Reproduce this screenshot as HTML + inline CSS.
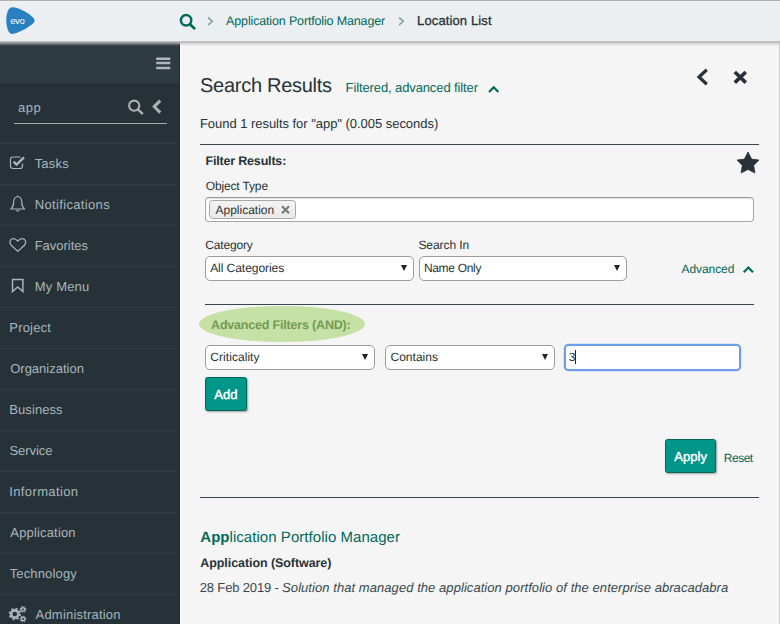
<!DOCTYPE html>
<html><head><meta charset="utf-8"><title>Search Results</title>
<style>
*{box-sizing:border-box;margin:0;padding:0}
html,body{width:780px;height:624px;overflow:hidden;background:#f5f5f5;font-family:"Liberation Sans",sans-serif;color:#263238;font-size:13px}
.a,.t{position:absolute;white-space:nowrap}
.t{line-height:20px;text-rendering:geometricPrecision}
#top{position:absolute;left:0;top:0;width:780px;height:41px;background:#eceff1;border-top:1px solid #b0aeae;box-shadow:inset 0 1px 0 #f0f3f5,inset 0 -1px 0 #eff2f4}
#shadow{position:absolute;left:0;top:41px;width:780px;height:5px;z-index:9;background:linear-gradient(rgba(188,188,188,.98) 0 1px,rgba(188,188,188,.81) 1px 2px,rgba(188,188,188,.57) 2px 3px,rgba(188,188,188,.31) 3px 4px,rgba(188,188,188,.1) 4px 5px)}
#side{position:absolute;left:0;top:41px;width:180px;height:583px;background:#263238}
#side .burger{position:absolute;left:0;top:0;width:180px;height:42px;background:#2e3b42}
#side .sh{position:absolute;left:0;top:0;width:180px;height:6px;background:linear-gradient(rgba(190,190,190,.85),rgba(160,165,168,.55) 30%,rgba(120,128,132,.25) 60%,rgba(45,58,66,0))}
.ln{position:absolute;left:0;width:180px;height:1px;background:#2e3d45}
.sel{position:absolute;height:25px;background:#fff;border:1px solid #9c9c9c;border-radius:5px}
.sel:after{content:"";position:absolute;right:6px;top:8px;border-left:3.5px solid transparent;border-right:3.5px solid transparent;border-top:6px solid #222}
.btn{position:absolute;background:#009688;border-radius:2.5px;border:1px solid #00695c;box-shadow:1px 1px 2px rgba(0,0,0,.35)}
.hr{position:absolute;height:1px;background:#37474f}
</style></head><body>
<div id="top"></div>
<div id="shadow"></div>
<div class="a" style="left:779px;top:41px;width:1px;height:583px;background:#cdcdcd"></div>
<svg class="a" style="left:6px;top:7px" width="30" height="28" viewBox="0 0 30 28"><path d="M5.2 0.4 C10 -1 24 6.5 27.5 11 C29 13 29 14.6 27.3 16.2 C22.5 20.8 10 27.3 5.5 27 C2.5 26.5 0.3 20 0.3 13.5 C0.3 7 2 1.3 5.2 0.4Z" fill="#2980c0"/><text x="4.2" y="16.9" font-family="Liberation Sans, sans-serif" font-size="9.5" fill="#fff" letter-spacing="-0.4">evo</text></svg>
<svg class="a" style="left:179px;top:13px" width="17" height="17" viewBox="0 0 17 17"><circle cx="7.1" cy="7.3" r="5.2" fill="none" stroke="#00695c" stroke-width="2.5"/><path d="M11.2 11.4 L15.2 15.2" stroke="#00695c" stroke-width="2.7" stroke-linecap="round"/></svg>
<svg class="a" style="left:206px;top:16px" width="9" height="11" viewBox="0 0 9 11"><path d="M2 1.5 L6.3 5.3 L2 9.1" fill="none" stroke="#90a4ae" stroke-width="1.7"/></svg>
<div class="t" id="bc1" style="left:226.11px;top:10.70px;font-size:12.5px;font-weight:400;color:#00695c;letter-spacing:-0.151px;">Application Portfolio Manager</div>
<svg class="a" style="left:397px;top:16px" width="9" height="11" viewBox="0 0 9 11"><path d="M2 1.5 L6.3 5.3 L2 9.1" fill="none" stroke="#90a4ae" stroke-width="1.7"/></svg>
<div class="t" id="bc2" style="left:417.11px;top:11.00px;font-size:13px;font-weight:400;color:#263238;letter-spacing:0.118px;-webkit-text-stroke:.3px #263238">Location List</div>

<div id="side">
  <div class="burger"></div>
  <svg class="a" style="left:156px;top:16px" width="15" height="13" viewBox="0 0 15 13"><path d="M.2 1.7h14.1M.2 6.1h14.1M.2 10.9h14.1" stroke="#b0b6b9" stroke-width="2.5"/></svg>
  <div class="a" style="left:14px;top:82px;width:153px;height:1px;background:#a9adaf"></div>
  <svg class="a" style="left:127px;top:57px" width="17" height="17" viewBox="0 0 17 17"><circle cx="7.2" cy="7.7" r="5.1" fill="none" stroke="#acb0b3" stroke-width="2.1"/><path d="M11.1 11.6 L15.1 15.4" stroke="#acb0b3" stroke-width="2.4" stroke-linecap="round"/></svg>
  <svg class="a" style="left:151px;top:57.5px" width="12" height="15" viewBox="0 0 12 15"><path d="M9.2 1.6 L3.2 7.6 L9.2 13.6" fill="none" stroke="#acb0b3" stroke-width="3"/></svg>
  <div class="ln" style="top:102px"></div><div class="ln" style="top:143px"></div><div class="ln" style="top:184px"></div><div class="ln" style="top:225px"></div><div class="ln" style="top:266px"></div><div class="ln" style="top:307px"></div><div class="ln" style="top:348px"></div><div class="ln" style="top:389px"></div><div class="ln" style="top:430px"></div><div class="ln" style="top:471px"></div><div class="ln" style="top:512px"></div><div class="ln" style="top:553px"></div>
  <!-- tasks icon -->
  <svg class="a" style="left:9px;top:114px" width="18" height="15" viewBox="0 0 18 15"><path d="M13.5 8.5 V11 Q13.5 13.5 11 13.5 H4 Q1.5 13.5 1.5 11 V4.5 Q1.5 2 4 2 H11.5" fill="none" stroke="#a9b4ba" stroke-width="1.2"/><path d="M4.6 6.6 L7.6 9.6 L15 2.4" fill="none" stroke="#a9b4ba" stroke-width="2.4"/></svg>
  <!-- bell -->
  <svg class="a" style="left:9px;top:154px" width="18" height="18" viewBox="0 0 18 18"><path d="M8.7 1.5 C5.6 2 4.6 4.6 4.6 7.4 C4.6 11 3.4 12.6 1.8 14 H15.6 C14 12.6 12.8 11 12.8 7.4 C12.8 4.6 11.8 2 8.7 1.5Z" fill="none" stroke="#a9b4ba" stroke-width="1.2" stroke-linejoin="round"/><path d="M7 15 Q8.7 17.4 10.4 15" fill="none" stroke="#a9b4ba" stroke-width="1.1"/><circle cx="8.7" cy="1.2" r=".8" fill="#a9b4ba"/></svg>
  <!-- heart -->
  <svg class="a" style="left:8px;top:196px" width="20" height="16" viewBox="0 0 20 16"><path d="M9.8 14.4 L3.2 8.2 C0.6 5.4 2 1.6 5.4 1.6 C7.6 1.6 9 3.2 9.8 4.2 C10.6 3.2 12 1.6 14.2 1.6 C17.6 1.6 19 5.4 16.4 8.2Z" fill="none" stroke="#a9b4ba" stroke-width="1.3" stroke-linejoin="round"/></svg>
  <!-- bookmark -->
  <svg class="a" style="left:11px;top:237px" width="14" height="16" viewBox="0 0 14 16"><path d="M1.5 1.6 H11.9 V13.6 L6.7 9 L1.5 13.6Z" fill="none" stroke="#a9b4ba" stroke-width="1.5"/></svg>
  <!-- cogs -->
  <svg class="a" style="left:8px;top:565px" width="20" height="18" viewBox="0 0 20 18"><g fill="none" stroke="#a9b4ba"><circle cx="6.8" cy="8" r="3.6" stroke-width="2.6"/><circle cx="6.8" cy="8" r="5.3" stroke-width="1.8" stroke-dasharray="2.1 2.06"/><circle cx="15" cy="3.4" r="1.7" stroke-width="1.5"/><circle cx="15" cy="3.4" r="2.8" stroke-width="1.2" stroke-dasharray="1.1 1.1"/><circle cx="15" cy="13" r="1.7" stroke-width="1.5"/><circle cx="15" cy="13" r="2.8" stroke-width="1.2" stroke-dasharray="1.1 1.1"/></g></svg>
</div>
<div class="t" id="srch" style="left:17.96px;top:97.50px;font-size:13px;font-weight:400;color:#a9b6bd;letter-spacing:0.501px;">app</div><div class="t" id="m1" style="left:34.68px;top:153.80px;font-size:13px;font-weight:400;color:#a9b6bd;letter-spacing:0.201px;">Tasks</div><div class="t" id="m2" style="left:34.68px;top:194.80px;font-size:13px;font-weight:400;color:#a9b6bd;letter-spacing:0.352px;">Notifications</div><div class="t" id="m3" style="left:34.68px;top:235.80px;font-size:13px;font-weight:400;color:#a9b6bd;letter-spacing:-0.011px;">Favorites</div><div class="t" id="m4" style="left:34.68px;top:276.80px;font-size:13px;font-weight:400;color:#a9b6bd;letter-spacing:0.173px;">My Menu</div><div class="t" id="m5" style="left:9.31px;top:317.80px;font-size:13px;font-weight:400;color:#a9b6bd;letter-spacing:0.195px;">Project</div><div class="t" id="m6" style="left:10.21px;top:358.80px;font-size:13px;font-weight:400;color:#a9b6bd;letter-spacing:0.000px;">Organization</div><div class="t" id="m7" style="left:9.31px;top:399.80px;font-size:13px;font-weight:400;color:#a9b6bd;letter-spacing:0.075px;">Business</div><div class="t" id="m8" style="left:9.50px;top:440.80px;font-size:13px;font-weight:400;color:#a9b6bd;letter-spacing:-0.060px;">Service</div><div class="t" id="m9" style="left:9.31px;top:481.80px;font-size:13px;font-weight:400;color:#a9b6bd;letter-spacing:0.365px;">Information</div><div class="t" id="m10" style="left:10.37px;top:522.80px;font-size:13px;font-weight:400;color:#a9b6bd;letter-spacing:0.161px;">Application</div><div class="t" id="m11" style="left:9.65px;top:563.80px;font-size:13px;font-weight:400;color:#a9b6bd;letter-spacing:0.150px;">Technology</div><div class="t" id="m12" style="left:35.58px;top:604.80px;font-size:13px;font-weight:400;color:#a9b6bd;letter-spacing:0.193px;">Administration</div>

<div class="a" style="left:179px;top:41px;width:1px;height:583px;background:#1f2b31"></div>
<div class="a" style="left:180px;top:41px;width:1px;height:583px;background:#fff"></div>
<div id="main">
  <div class="t" id="h1" style="left:200.07px;top:75.80px;font-size:20px;font-weight:400;color:#263238;letter-spacing:-0.282px;">Search Results</div><div class="t" id="flt" style="left:345.55px;top:77.90px;font-size:13px;font-weight:400;color:#00695c;letter-spacing:-0.111px;">Filtered, advanced filter</div>
  <svg class="a" style="left:487px;top:84px" width="13" height="10" viewBox="0 0 13 10"><path d="M2 8 L6.7 3.2 L11.4 8" fill="none" stroke="#00695c" stroke-width="2.2"/></svg>
  <svg class="a" style="left:695px;top:67px" width="15" height="20" viewBox="0 0 15 20"><path d="M11.8 2.8 L4 10 L11.8 17.2" fill="none" stroke="#263238" stroke-width="3.2"/></svg>
  <svg class="a" style="left:732px;top:69px" width="17" height="17" viewBox="0 0 17 17"><path d="M2.8 3 L13.8 13.6 M13.8 3 L2.8 13.6" fill="none" stroke="#263238" stroke-width="3.6"/></svg>
  <div class="t" id="found" style="left:199.91px;top:113.60px;font-size:13px;font-weight:400;color:#263238;letter-spacing:-0.036px;">Found 1 results for "app" (0.005 seconds)</div>
  <div class="hr" style="left:200px;top:144px;width:559px"></div>
  <div class="t" id="fr" style="left:205.46px;top:151.00px;font-size:12.5px;font-weight:700;color:#263238;letter-spacing:-0.178px;">Filter Results:</div>
  <svg class="a" style="left:736px;top:151px" width="24" height="23" viewBox="0 0 24 23"><path d="M12 1 L15.6 8.1 L23 9 L17.7 14.5 L18.9 22 L12 18.4 L5.1 22 L6.3 14.5 L1 9 L8.4 8.1Z" fill="#263238" stroke="#263238" stroke-width=".8" stroke-linejoin="round"/></svg>
  <div class="t" id="ot" style="left:205.73px;top:176.30px;font-size:12px;font-weight:400;color:#263238;letter-spacing:-0.147px;">Object Type</div>
  <div class="a" style="left:205px;top:197px;width:549px;height:25px;background:#fff;border:1px solid #a6a6a6;border-top-color:#999;border-radius:4px;box-shadow:inset 0 1px 1px rgba(0,0,0,.12)"></div>
  <div class="a" style="left:209px;top:200px;width:87px;height:19px;background:linear-gradient(#f3f3f3,#eaeaea);border:1px solid #a8a8a8;border-radius:3.5px"></div>
  <div class="t" id="tagt" style="left:215.57px;top:199.80px;font-size:12px;font-weight:400;color:#333;letter-spacing:-0.015px;">Application</div>
  <svg class="a" style="left:280px;top:204px" width="11" height="11" viewBox="0 0 11 11"><path d="M2 2.2 L9 9.2 M9 2.2 L2 9.2" stroke="#777" stroke-width="2.1"/></svg>
  <div class="t" id="cat" style="left:205.35px;top:235.00px;font-size:12px;font-weight:400;color:#263238;letter-spacing:-0.189px;">Category</div><div class="t" id="si" style="left:418.45px;top:235.00px;font-size:12px;font-weight:400;color:#263238;letter-spacing:-0.082px;">Search In</div>
  <div class="sel" style="left:205px;top:256px;width:209px"></div>
  <div class="sel" style="left:419px;top:256px;width:208px"></div>
  <div class="t" id="s1t" style="left:210.13px;top:257.80px;font-size:12px;font-weight:400;color:#263238;letter-spacing:-0.045px;">All Categories</div><div class="t" id="s2t" style="left:423.90px;top:257.80px;font-size:12px;font-weight:400;color:#263238;letter-spacing:-0.309px;">Name Only</div>
  <div class="t" id="adv" style="left:681.59px;top:259.30px;font-size:12px;font-weight:400;color:#00695c;letter-spacing:-0.084px;">Advanced</div>
  <svg class="a" style="left:741.5px;top:264px" width="13" height="10" viewBox="0 0 13 10"><path d="M1.8 8.3 L6.4 3.6 L11 8.3" fill="none" stroke="#00695c" stroke-width="2.2"/></svg>
  <div class="hr" style="left:205px;top:304px;width:549px"></div>
  <div class="a" style="left:199px;top:305.6px;width:166px;height:36.3px;border-radius:50%;background:#c5e1a5;filter:blur(.6px)"></div>
  <div class="t" id="af" style="left:211.05px;top:315.10px;font-size:12.5px;font-weight:700;color:#749a50;letter-spacing:-0.185px;">Advanced Filters (AND):</div>
  <div class="sel" style="left:205px;top:345px;width:170px"></div>
  <div class="sel" style="left:385px;top:345px;width:170px"></div>
  <div class="t" id="s3t" style="left:210.36px;top:347.00px;font-size:12px;font-weight:400;color:#263238;letter-spacing:0.045px;">Criticality</div><div class="t" id="s4t" style="left:390.53px;top:347.00px;font-size:12px;font-weight:400;color:#263238;letter-spacing:0.008px;">Contains</div>
  <div class="a" style="left:564px;top:344px;width:177px;height:27px;background:#fff;border:2px solid #6e9de9;border-radius:4.5px;box-shadow:0 0 0 .6px rgba(110,157,233,.35)"></div>
  <div class="t" id="in3" style="left:568.70px;top:346.60px;font-size:12px;font-weight:400;color:#263238;letter-spacing:0.000px;">3</div>
  <div class="a" style="left:575px;top:350px;width:1px;height:14px;background:#222"></div>
  <div class="btn" style="left:205px;top:377.3px;width:42px;height:33.4px"></div>
  <div class="t" id="addt" style="left:214.36px;top:385.10px;font-size:13px;font-weight:400;color:#fff;letter-spacing:-0.019px;-webkit-text-stroke:.45px #fff">Add</div>
  <div class="btn" style="left:665px;top:439px;width:51px;height:33.5px"></div>
  <div class="t" id="applyt" style="left:674.37px;top:447.40px;font-size:13px;font-weight:400;color:#fff;letter-spacing:0.008px;-webkit-text-stroke:.45px #fff">Apply</div><div class="t" id="reset" style="left:723.76px;top:447.80px;font-size:12px;font-weight:400;color:#00695c;letter-spacing:-0.480px;">Reset</div>
  <div class="hr" style="left:200px;top:497px;width:559px"></div>
  <div class="t" id="res" style="left:200.27px;top:527.80px;font-size:15px;font-weight:400;color:#00695c;letter-spacing:0.046px;"><b>App</b>lication Portfolio Manager</div><div class="t" id="sub" style="left:200.27px;top:553.20px;font-size:12.5px;font-weight:700;color:#263238;letter-spacing:-0.074px;">Application (Software)</div><div class="t" id="desc" style="left:199.79px;top:577.50px;font-size:13px;font-weight:400;color:#37474f;letter-spacing:0.041px;"><span style='letter-spacing:-.16px'>28 Feb 2019 - </span><i style='letter-spacing:.06px'>Solution that managed the application portfolio of the enterprise abracadabra</i></div>
</div>
</body></html>
